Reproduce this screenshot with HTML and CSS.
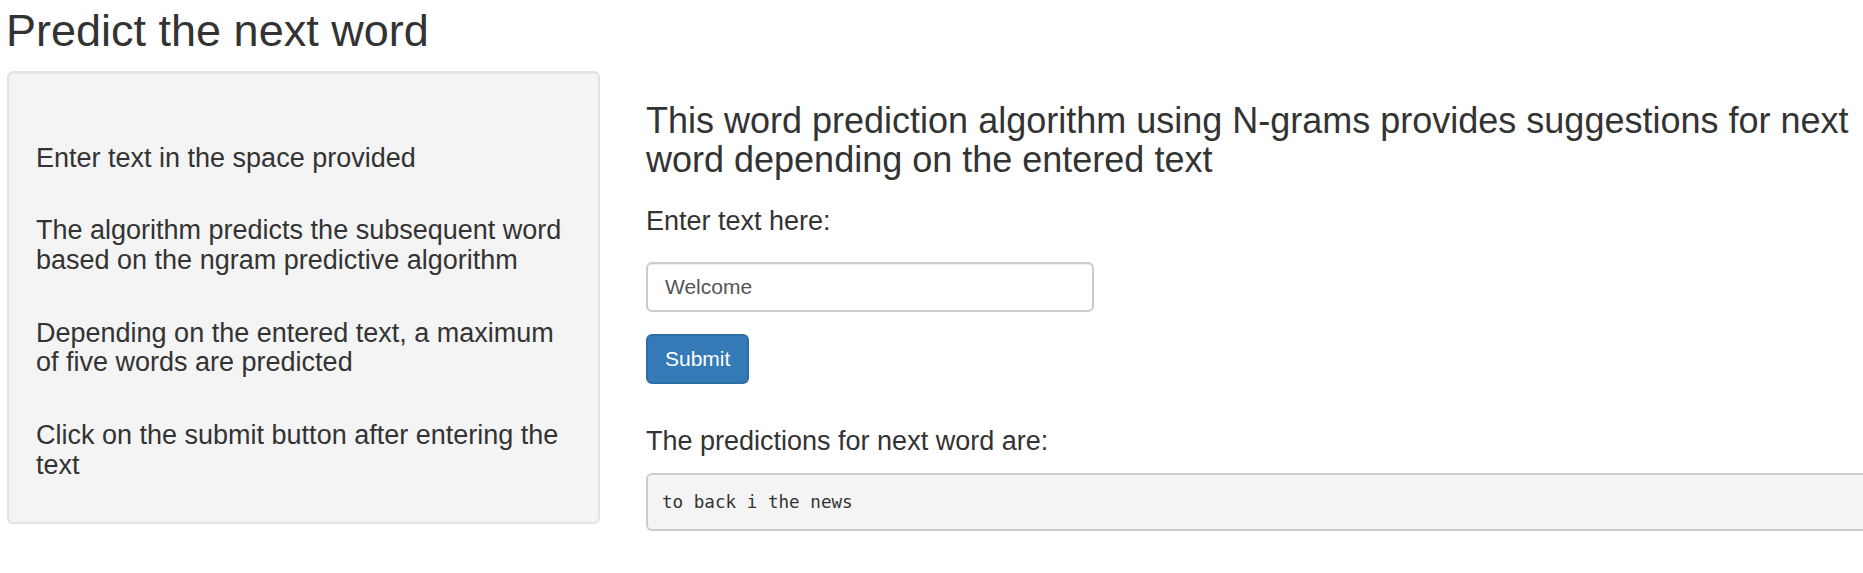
FILE: index.html
```html
<!DOCTYPE html>
<html lang="en">
<head>
<meta charset="utf-8">
<title>Predict the next word</title>
<link rel="stylesheet" href="styles.css">
</head>
<body>
<div class="page">
  <h2 class="title">Predict the next word</h2>
  <div class="row">
    <aside class="sidebar">
      <div class="well">
        <h4 class="note">Enter text in the space provided</h4>
        <h4 class="note">The algorithm predicts the subsequent word based on the ngram predictive algorithm</h4>
        <h4 class="note">Depending on the entered text, a maximum of five words are predicted</h4>
        <h4 class="note">Click on the submit button after entering the text</h4>
      </div>
    </aside>
    <main class="main">
      <h3 class="lead">This word prediction algorithm using N-grams provides suggestions for next word depending on the entered text</h3>
      <div class="form-group">
        <label class="field-label" for="text">Enter text here:</label>
        <input class="form-control" id="text" type="text" value="Welcome">
      </div>
      <button class="btn-primary" type="button">Submit</button>
      <h4 class="out-label">The predictions for next word are:</h4>
      <pre class="output">to back i the news</pre>
    </main>
  </div>
</div>
</body>
</html>
```
FILE: styles.css
```css
html, body {
  margin: 0;
  padding: 0;
  background: #ffffff;
}

body {
  font-family: "Liberation Sans", Arial, Helvetica, sans-serif;
  color: #333333;
}

.page {
  padding: 6px 0 0 7px;
  overflow: hidden;
  height: 567px;
}

.title {
  margin: 0 0 15px -1px;
  font-size: 45px;
  line-height: 49.5px;
  font-weight: 500;
}

.row {
  display: flex;
  align-items: flex-start;
  gap: 46px;
  width: 1893px;
}

.sidebar {
  flex: 0 0 593px;
}

.well {
  box-sizing: border-box;
  width: 593px;
  background: #f4f4f4;
  border: 2px solid #e3e3e3;
  border-radius: 6px;
  box-shadow: inset 0 1px 1px rgba(0, 0, 0, 0.05);
  padding: 71px 27px 27px 27px;
}

.note {
  margin: 0 0 43px 0;
  font-size: 27px;
  line-height: 29.7px;
  font-weight: 500;
}

.note:last-child {
  margin-bottom: 15px;
}

.main {
  flex: 0 0 1254px;
}

.lead {
  margin: 30px 0 0 0;
  font-size: 36px;
  line-height: 39.6px;
  font-weight: 500;
}

.form-group {
  margin-top: 27px;
  margin-bottom: 22px;
}

.field-label {
  display: block;
  font-size: 27px;
  line-height: 29.7px;
  margin-bottom: 26px;
}

.form-control {
  display: block;
  box-sizing: border-box;
  width: 448px;
  height: 50px;
  padding: 8px 17px;
  font-family: "Liberation Sans", Arial, Helvetica, sans-serif;
  font-size: 21px;
  line-height: 30px;
  color: #555555;
  background: #ffffff;
  border: 2px solid #cccccc;
  border-radius: 6px;
  box-shadow: inset 0 1px 1px rgba(0, 0, 0, 0.075);
  outline: none;
}

.btn-primary {
  display: block;
  box-sizing: border-box;
  height: 50px;
  padding: 8px 17px;
  font-family: "Liberation Sans", Arial, Helvetica, sans-serif;
  font-size: 21px;
  line-height: 30px;
  color: #ffffff;
  background: #337ab7;
  border: 2px solid #2e6da4;
  border-radius: 6px;
}

.out-label {
  margin: 43px 0 16px 0;
  font-size: 27px;
  line-height: 29.7px;
  font-weight: 500;
}

.output {
  margin: 0;
  padding: 14px;
  font-family: "DejaVu Sans Mono", "Liberation Mono", monospace;
  font-size: 17.6px;
  line-height: 26px;
  color: #333333;
  background: #f4f4f4;
  border: 2px solid #cccccc;
  border-radius: 6px;
}
```
